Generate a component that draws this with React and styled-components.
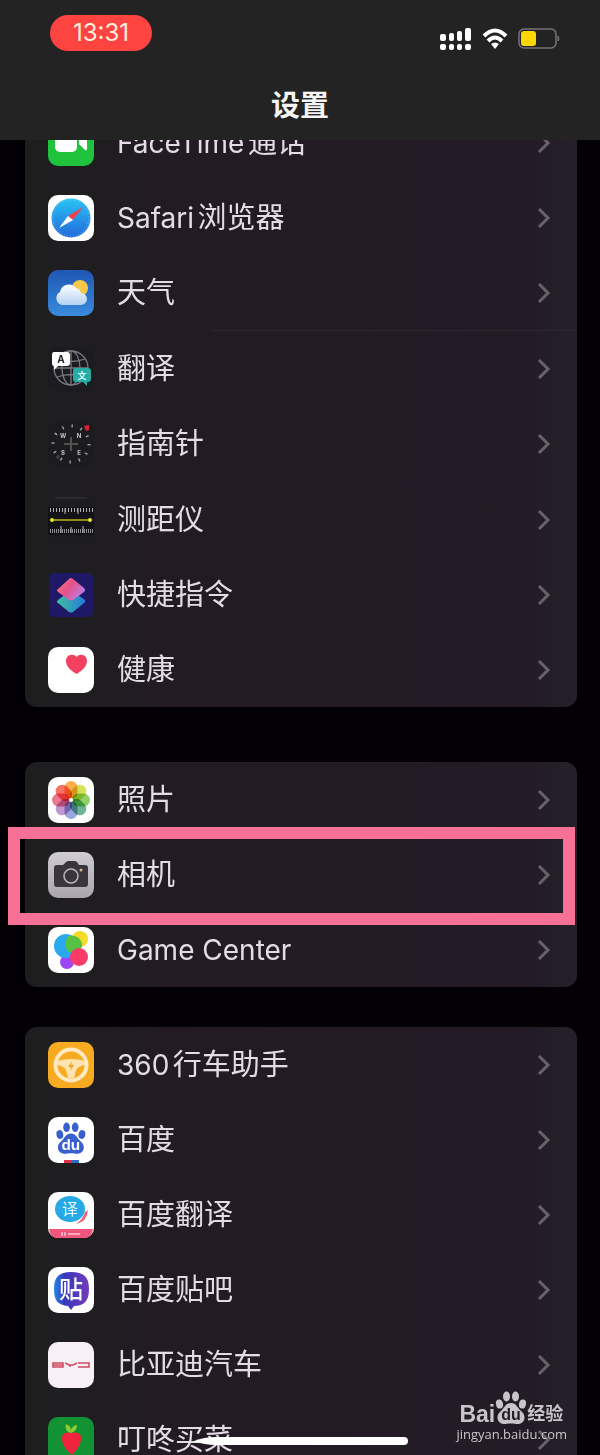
import React from "react";
import styled, { createGlobalStyle } from "styled-components";

const GlobalStyle = createGlobalStyle`
  * {
    box-sizing: border-box;
  }
  body {
    margin: 0;
    background-color: #020004;
    font-family: Inter, "Noto Sans CJK SC", sans-serif;
  }
`;

const ScreenStyles = styled.div`
  position: relative;
  display: flex;
  flex-direction: column;
  height: 100vh;
  overflow: hidden;
`;

const HeaderStyles = styled.header`
  position: relative;
  z-index: 2;
  flex-shrink: 0;
  padding: 15px 40px 13px 50px;
  background-color: #232323;
  .title {
    margin: 34px 0 0 -10px;
    color: #f4f4f4;
    font-size: 29px;
    font-weight: 600;
    line-height: 42px;
    text-align: center;
  }
`;

const StatusBar = styled.div`
  display: flex;
  justify-content: space-between;
  align-items: flex-start;
`;

const Clock = styled.time`
  padding: 0 23px;
  border-radius: 18px;
  background-color: #fd4441;
  color: #fdeedd;
  font-size: 24px;
  line-height: 36px;
`;

const StatusIcons = styled.div`
  display: flex;
  align-items: center;
  gap: 10px;
  padding-top: 12px;
`;

const ListStyles = styled.main`
  display: flex;
  flex-direction: column;
  flex-shrink: 0;
  margin-top: -35px;
  padding: 0 23px 0 25px;
`;

const Group = styled.ul`
  margin: 0;
  margin-bottom: ${(props) => props.$space || "0"};
  padding: 0;
  list-style: none;
  border-radius: 12px;
  background-image: linear-gradient(
    to right,
    #1e1e1f,
    #1f1d20 12%,
    #221b24 24%,
    #231c26 92%,
    #242029
  );
`;

const RowStyles = styled.li`
  position: relative;
  border-top: ${(props) => (props.$line ? "1px solid" : "0")};
  border-image: linear-gradient(
      to right,
      transparent 34%,
      ${(props) => props.$line || "transparent"} 34%
    )
    1;
  .link {
    display: flex;
    align-items: center;
    height: 75px;
    padding: 0 26px 0 23px;
    color: #e2dce3;
    text-decoration: none;
  }
  .label {
    flex: 1;
    margin-left: 23px;
    font-size: 29px;
    line-height: 42px;
    text-autospace: normal;
  }
  .latin {
    font-size: 28px;
  }
  svg {
    display: block;
    flex-shrink: 0;
  }
`;

const Highlight = styled.span`
  position: absolute;
  top: -10px;
  right: 2px;
  bottom: -13px;
  left: -17px;
  z-index: 1;
  border: 12px solid #f77096;
  pointer-events: none;
`;

const HomeIndicator = styled.svg`
  position: absolute;
  bottom: 9px;
  left: 50%;
  z-index: 2;
  margin-left: -108px;
`;

const WatermarkStyles = styled.div`
  position: absolute;
  right: 33px;
  bottom: 12px;
  z-index: 3;
  color: #c8c5ca;
  .brand {
    display: flex;
    align-items: flex-end;
    height: 34px;
    padding-left: 3px;
    font-family: "Liberation Sans", "Noto Sans CJK SC", sans-serif;
    font-size: 23px;
    font-weight: 700;
    line-height: 22px;
  }
  .brand-name {
    font-size: 18px;
  }
  .site {
    font-family: "Open Sans", sans-serif;
    font-size: 13px;
    line-height: 18px;
  }
`;

const Tile = ({ fill = "#fff", children }) => (
  <svg width="46" height="46" viewBox="0 0 46 46" aria-hidden="true">
    <rect width="46" height="46" rx="10" fill={fill} />
    {children}
  </svg>
);

const Paw = ({ fill, textFill }) => (
  <g fill={fill}>
    <ellipse cx="4" cy="13" rx="3.500" ry="4.600" transform="rotate(-12 4 13)" />
    <ellipse cx="11" cy="5.500" rx="3.500" ry="5" />
    <ellipse cx="20" cy="5.500" rx="3.500" ry="5" />
    <ellipse cx="27" cy="13" rx="3.500" ry="4.600" transform="rotate(12 27 13)" />
    <path d="M15.500 12C10 12 9 17 5.500 20C0 24 1 32 8 33C11 33 13 32.500 15.500 32.500C18 32.500 20 33 23 33C30 32 31 24 25.500 20C22 17 21 12 15.500 12Z" />
    <text
      x="15.500"
      y="29"
      fill={textFill}
      fontFamily="Liberation Sans"
      fontSize="16"
      fontWeight="700"
      textAnchor="middle"
    >
      du
    </text>
  </g>
);

const FaceTimeIcon = () => (
  <Tile fill="#1fc43c">
    <rect x="7" y="10" width="22" height="22" rx="5" fill="#fff" />
    <path d="M31 18L37 12Q39 11 39 13V29Q39 31 37 30L31 24Z" fill="#fff" />
  </Tile>
);

const SafariIcon = () => (
  <Tile>
    <defs>
      <linearGradient id="safari" x2="0" y2="1">
        <stop stopColor="#28c4f3" />
        <stop offset="1" stopColor="#2468db" />
      </linearGradient>
    </defs>
    <circle cx="23" cy="23" r="19.500" fill="url(#safari)" />
    <circle
      cx="23"
      cy="23"
      r="18"
      fill="none"
      stroke="#6cc4f2"
      strokeWidth="1.500"
      strokeDasharray="0.600 2.227"
    />
    <path d="M35 12L20 21L25 25Z" fill="#f1404b" />
    <path d="M11 33L20 21L25 25Z" fill="#fff" />
  </Tile>
);

const WeatherIcon = () => (
  <Tile fill="url(#sky)">
    <defs>
      <linearGradient id="sky" x2="0" y2="1">
        <stop stopColor="#1e57b4" />
        <stop offset="1" stopColor="#3b8bdc" />
      </linearGradient>
      <linearGradient id="cloud" x2="0" y2="1">
        <stop stopColor="#fff" />
        <stop offset="1" stopColor="#b5d2f3" />
      </linearGradient>
    </defs>
    <circle cx="32" cy="18" r="8" fill="#f8c849" />
    <path
      d="M14 35A7 7 0 0 1 12 22A9 9 0 0 1 28 18A7 7 0 0 1 33 23A6 6 0 0 1 33 35Z"
      fill="url(#cloud)"
    />
  </Tile>
);

const TranslateIcon = () => (
  <Tile fill="#1c1b20">
    <g fill="none" stroke="#77777f" strokeWidth="1.300">
      <circle cx="23" cy="22" r="17" />
      <ellipse cx="23" cy="22" rx="9" ry="17" />
      <path d="M23 5V39M6 22H40M9 13Q23 18 37 13M9 31Q23 26 37 31" />
    </g>
    <path d="M6 6H19Q22 6 22 9V17Q22 20 19 20H10L6 24V20Q4 20 4 17V9Q4 6 6 6Z" fill="#fff" />
    <text x="13" y="17" fill="#222" fontSize="10" fontWeight="700" textAnchor="middle">
      A
    </text>
    <path d="M28 22H40Q43 22 43 25V33Q43 36 40 36H39V40L35 36H28Q25 36 25 33V25Q25 22 28 22Z" fill="#28aaa5" />
    <text
      x="34"
      y="33"
      fill="#e0ffff"
      fontFamily="Noto Sans CJK SC"
      fontSize="9"
      fontWeight="700"
      textAnchor="middle"
    >
      文
    </text>
  </Tile>
);

const CompassIcon = () => (
  <Tile fill="#1c1b1d">
    <circle
      cx="23"
      cy="23"
      r="18"
      fill="none"
      stroke="#a3a3a3"
      strokeWidth="3"
      strokeDasharray="1.400 8.024"
    />
    <path d="M23 16V30M16 23H30" stroke="#515151" strokeWidth="2" />
    <g fill="#c5c5c5" fontSize="6" fontWeight="700" textAnchor="middle">
      <text x="15" y="17">W</text>
      <text x="31" y="17">N</text>
      <text x="15" y="34">S</text>
      <text x="31" y="34">E</text>
    </g>
    <path d="M36 5L41 4V9L38 10Z" fill="#d81f35" />
    <circle cx="10" cy="36" r="2" fill="#3b3b3b" />
  </Tile>
);

const MeasureIcon = () => (
  <Tile fill="#1d1c1e">
    <path d="M7 1H39" stroke="#3d3d3f" />
    <rect y="10" width="46" height="28" fill="#141418" />
    <g fill="none" stroke="#b0b0b0">
      <path d="M2 13H45" strokeWidth="4" strokeDasharray="1 2" />
      <path d="M2 34H45" strokeWidth="4" strokeDasharray="1 1" stroke="#8f8f8f" />
      <path d="M13 29V36M23 30V36M35 29V36M17 11V17M30 11V17" />
    </g>
    <path d="M4 23H42" stroke="#b8b91d" strokeWidth="1.500" />
    <circle cx="4" cy="23" r="2" fill="#e7e62b" />
    <circle cx="42" cy="23" r="2" fill="#e7e62b" />
  </Tile>
);

const ShortcutsIcon = () => (
  <svg width="46" height="46" viewBox="0 0 46 46" aria-hidden="true">
    <defs>
      <linearGradient id="layerTop" x2="1" y2="0.600">
        <stop stopColor="#f48174" />
        <stop offset="0.500" stopColor="#e6508a" />
        <stop offset="1" stopColor="#bd7de1" />
      </linearGradient>
      <linearGradient id="layerBottom" x2="1">
        <stop stopColor="#3dbf9c" />
        <stop offset="1" stopColor="#267bdc" />
      </linearGradient>
    </defs>
    <rect x="1" y="1" width="44" height="44" rx="5" fill="#1f1866" />
    <path d="M10 28L23 18L37 28Q38 30 36 31L25 40Q23 41 21 40L10 31Q8 30 10 28Z" fill="url(#layerBottom)" />
    <path d="M10 17L21 7Q23 5 25 7L36 16Q38 18 36 20L25 28Q23 29 21 28L10 20Q8 18 10 17Z" fill="url(#layerTop)" />
  </svg>
);

const HealthIcon = () => (
  <Tile>
    <path
      d="M28.500 27C22 23 18 19 18 14C18 7 26 6 28.500 10C31 6 39 7 39 14C39 19 35 23 28.500 27Z"
      fill="#f4405f"
    />
  </Tile>
);

const petals = ["#f9a02c", "#cfdc3a", "#7cc84e", "#55a884", "#8799d6", "#b585c6", "#e7607b", "#f4594a"];

const Petal = styled.rect`
  mix-blend-mode: multiply;
`;

const PhotosIcon = () => (
  <Tile>
    {petals.map((color, index) => (
      <Petal
        key={color}
        x="16.500"
        y="4"
        width="13"
        height="18"
        rx="6.500"
        fill={color}
        fillOpacity="0.850"
        transform={`rotate(${index * 45} 23 23)`}
      />
    ))}
    <circle cx="23" cy="23" r="2" fill="#fff" />
  </Tile>
);

const CameraIcon = () => (
  <Tile fill="url(#silver)">
    <defs>
      <linearGradient id="silver" x2="0" y2="1">
        <stop stopColor="#d0ccd2" />
        <stop offset="1" stopColor="#aaa4ad" />
      </linearGradient>
    </defs>
    <path
      d="M9 13H15L18 10Q19 9 21 9H26Q28 9 29 10L31 13H37Q40 13 40 16V32Q40 35 37 35H9Q6 35 6 32V16Q6 13 9 13Z"
      fill="#39353c"
    />
    <circle cx="23" cy="24" r="7" fill="none" stroke="#bdb7bf" strokeWidth="1.500" />
    <circle cx="33" cy="18" r="1.500" fill="#d2b992" />
  </Tile>
);

const GameCenterIcon = () => (
  <Tile>
    <circle cx="32" cy="12" r="8" fill="#f4dc26" />
    <circle cx="19" cy="35" r="7" fill="#9b45f5" />
    <circle cx="18" cy="19" r="12" fill="#29a8ee" />
    <path d="M20 9C27 7 35 12 34 20C31 24 26 26 20 25C16 20 17 13 20 9Z" fill="#55c145" />
    <circle cx="31" cy="30" r="9" fill="#fa3b68" />
  </Tile>
);

const DriveIcon = () => (
  <Tile fill="#f7ab20">
    <circle cx="23" cy="23" r="15.500" fill="none" stroke="#ffe9c1" strokeWidth="4" />
    <path d="M9 19Q23 15 37 19V23Q30 24 28 28L26 36H20L18 28Q16 24 9 23Z" fill="#ffe3b0" />
    <path d="M24 19L20 25H23L22 29L26 23H23Z" fill="#f3a31c" />
  </Tile>
);

const BaiduIcon = () => (
  <Tile>
    <g transform="translate(8 5) scale(0.960)">
      <Paw fill="#3a5fce" textFill="#fff" />
    </g>
    <path d="M16 43H23V46H16Z" fill="#df3048" />
    <path d="M23 43H31V46H23Z" fill="#296ec5" />
  </Tile>
);

const BaiduTranslateIcon = () => (
  <Tile>
    <path d="M37 20L40 18Q39 30 28 32Q35 27 37 20Z" fill="#f2617b" />
    <ellipse cx="22" cy="17" rx="15" ry="13" fill="#27a9e5" />
    <text
      x="22"
      y="23"
      fill="#e5faff"
      fontFamily="Noto Sans CJK SC"
      fontSize="16"
      textAnchor="middle"
    >
      译
    </text>
    <path d="M1 37H45Q44 46 36 46H10Q2 46 1 37Z" fill="#f0567c" />
    <path d="M14 40V44M17 40V44M20 42H32" stroke="#ffc3d0" strokeWidth="1.500" />
  </Tile>
);

const TiebaIcon = () => (
  <Tile>
    <defs>
      <linearGradient id="tieba" x2="1">
        <stop stopColor="#2787e8" />
        <stop offset="0.300" stopColor="#3838bd" />
        <stop offset="1" stopColor="#733cb9" />
      </linearGradient>
    </defs>
    <path
      d="M23 5C36 5 41 10 41 22C41 34 36 39 26 39L23 43L20 39C10 38 6 34 6 22C6 10 11 5 23 5Z"
      fill="url(#tieba)"
    />
    <text
      x="23"
      y="31"
      fill="#fff"
      fontFamily="Noto Sans CJK SC"
      fontSize="24"
      fontWeight="500"
      textAnchor="middle"
    >
      贴
    </text>
  </Tile>
);

const BydIcon = () => (
  <Tile fill="#f7f0f5">
    <g fill="none" stroke="#cf4a62" strokeWidth="1.500">
      <path d="M5 21H15V25H5ZM5 23H15M17 21L21 23H25L29 21M22 23V25M30 21H41V25H30" />
    </g>
  </Tile>
);

const DingdongIcon = () => (
  <Tile fill="#129333">
    <path d="M14 20Q15 14 23 16Q32 14 33 20Q34 28 24 38Q13 29 14 20Z" fill="#f0243c" />
    <path d="M23 16Q16 14 18 7Q23 9 23 13Q25 8 29 8Q29 14 23 16Z" fill="#8ccb33" />
  </Tile>
);

const Chevron = () => (
  <svg width="14" height="22" viewBox="0 0 14 22" fill="none" aria-hidden="true">
    <path d="M2 2L11 11L2 20" stroke="#67616a" strokeWidth="3" />
  </svg>
);

const SignalIcon = () => (
  <svg width="32" height="24" viewBox="0 0 32 24" fill="#fff" aria-hidden="true">
    <rect x="0" y="7" width="6" height="7" rx="2" />
    <rect x="9" y="6" width="5" height="8" rx="2" />
    <rect x="17" y="4" width="5" height="10" rx="2" />
    <rect x="25" y="1" width="6" height="13" rx="2" />
    <rect x="0" y="17" width="6" height="6" rx="2" />
    <rect x="9" y="17" width="5" height="6" rx="2" />
    <rect x="17" y="17" width="5" height="6" rx="2" />
    <rect x="25" y="17" width="6" height="6" rx="2" />
  </svg>
);

const WifiIcon = () => (
  <svg width="26" height="24" viewBox="0 0 26 24" fill="none" aria-hidden="true">
    <path d="M2 9Q13 -2 24 9M6 14Q13 7 20 14" stroke="#fff" strokeWidth="4" />
    <path d="M9 17Q13 14 17 17L13 22Z" fill="#fff" />
  </svg>
);

const BatteryIcon = () => (
  <svg width="42" height="24" viewBox="0 0 42 24" fill="none" aria-hidden="true">
    <rect x="1" y="2" width="37" height="19" rx="5" stroke="#77727a" strokeWidth="1.500" />
    <rect x="3" y="4" width="15" height="15" rx="3" fill="#fed709" />
    <path d="M40 9Q42 12 40 14Z" fill="#77727a" stroke="#77727a" />
  </svg>
);

const groups = [
  {
    space: "55px",
    rows: [
      { latin: "FaceTime", label: "通话", Icon: FaceTimeIcon },
      { latin: "Safari", label: "浏览器", Icon: SafariIcon },
      { label: "天气", Icon: WeatherIcon },
      { label: "翻译", Icon: TranslateIcon, line: "#2d262f" },
      { label: "指南针", Icon: CompassIcon },
      { label: "测距仪", Icon: MeasureIcon, line: "#231c26" },
      { label: "快捷指令", Icon: ShortcutsIcon },
      { label: "健康", Icon: HealthIcon },
    ],
  },
  {
    space: "40px",
    rows: [
      { label: "照片", Icon: PhotosIcon },
      { label: "相机", Icon: CameraIcon, highlighted: true },
      { latin: "Game Center", Icon: GameCenterIcon },
    ],
  },
  {
    rows: [
      { latin: "360", label: "行车助手", Icon: DriveIcon },
      { label: "百度", Icon: BaiduIcon },
      { label: "百度翻译", Icon: BaiduTranslateIcon },
      { label: "百度贴吧", Icon: TiebaIcon },
      { label: "比亚迪汽车", Icon: BydIcon },
      { label: "叮咚买菜", Icon: DingdongIcon },
    ],
  },
];

const Row = ({ latin, label, Icon, line, highlighted }) => (
  <RowStyles $line={line}>
    <a className="link" href="#settings">
      <Icon />
      <span className="label">
        {latin && <span className="latin">{latin}</span>}
        {label}
      </span>
      <Chevron />
    </a>
    {highlighted && <Highlight />}
  </RowStyles>
);

const Header = () => (
  <HeaderStyles>
    <StatusBar>
      <Clock>13:31</Clock>
      <StatusIcons>
        <SignalIcon />
        <WifiIcon />
        <BatteryIcon />
      </StatusIcons>
    </StatusBar>
    <h1 className="title">设置</h1>
  </HeaderStyles>
);

const Watermark = () => (
  <WatermarkStyles>
    <div className="brand">
      <span>Bai</span>
      <svg width="32" height="34" viewBox="0 0 31 34" aria-hidden="true">
        <Paw fill="#c8c5ca" textFill="#232025" />
      </svg>
      <span className="brand-name">经验</span>
    </div>
    <div className="site">jingyan.baidu.com</div>
  </WatermarkStyles>
);

const App = () => {
  return (
    <ScreenStyles>
      <GlobalStyle />
      <Header />
      <ListStyles>
        {groups.map((group, index) => (
          <Group key={index} $space={group.space}>
            {group.rows.map((row) => (
              <Row key={row.label || row.latin} {...row} />
            ))}
          </Group>
        ))}
      </ListStyles>
      <HomeIndicator width="218" height="10" viewBox="0 0 218 10">
        <path d="M2 5Q12 1 24 1H212A4 4 0 0 1 212 9H24Q12 9 2 5Z" fill="#fff" />
      </HomeIndicator>
      <Watermark />
    </ScreenStyles>
  );
};

export default App;
